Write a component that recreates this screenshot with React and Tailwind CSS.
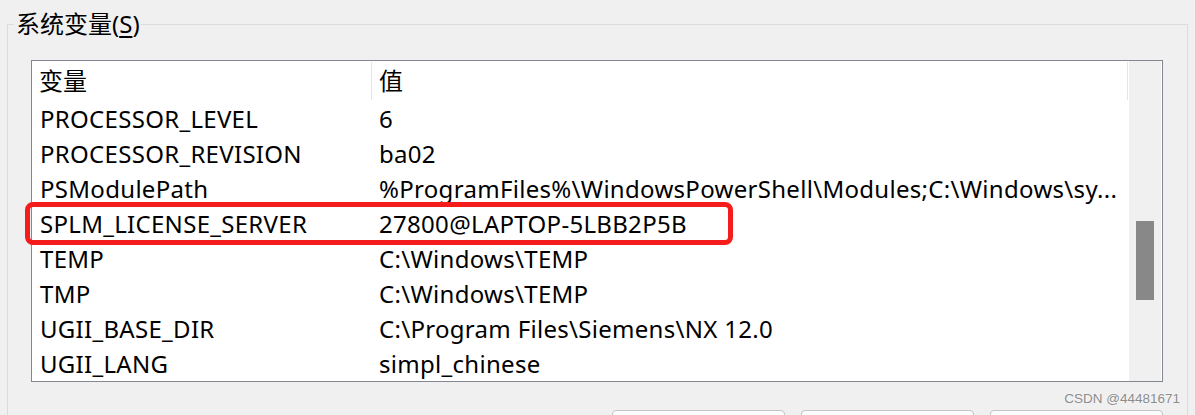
import React from 'react';

const rows = [
  ['PROCESSOR_LEVEL', '6'],
  ['PROCESSOR_REVISION', 'ba02'],
  ['PSModulePath', '%ProgramFiles%\\WindowsPowerShell\\Modules;C:\\Windows\\sy...'],
  ['SPLM_LICENSE_SERVER', '27800@LAPTOP-5LBB2P5B'],
  ['TEMP', 'C:\\Windows\\TEMP'],
  ['TMP', 'C:\\Windows\\TEMP'],
  ['UGII_BASE_DIR', 'C:\\Program Files\\Siemens\\NX 12.0'],
  ['UGII_LANG', 'simpl_chinese'],
];

const font = "font-['Noto_Sans','Noto_Sans_CJK_SC',sans-serif]";

const Row = ({ name, value }) => (
  <div className="flex h-[35px] leading-[35px] shrink-0 tracking-[0.3px]">
    <div className="w-[340px] pl-[8px] whitespace-nowrap overflow-hidden">{name}</div>
    <div className="flex-1 pl-[7px] whitespace-nowrap overflow-hidden">{value}</div>
  </div>
);

export default function App() {
  return (
    <div className={`relative w-[1195px] h-[415px] overflow-hidden bg-[#f0f0f0] text-black ${font}`}>
      <fieldset className="mx-[7px] mt-[9px] h-[440px] border border-[#dcdcdc]">
        <legend className="ml-[6px] pl-[2px] pr-[1px] text-[24px] leading-[30px]">
          系统变量(<span className="underline underline-offset-[3px]">S</span>)
        </legend>

        <div className="relative ml-[23px] mr-[24px] mt-[21px] h-[322px] border border-[#828790] bg-white flex text-[24px]">
          <div className="flex-1 flex flex-col overflow-hidden">
            <div className="flex h-[40px] leading-[40px] shrink-0">
              <div className="w-[339px] pl-[7px] border-r border-transparent">变量</div>
              <div className="flex-1 flex">
                <div className="w-px my-[1px] bg-[#e5e5e5]" />
                <div className="flex-1 pl-[7px]">值</div>
                <div className="w-px my-[1px] bg-[#e5e5e5]" />
              </div>
              <div className="w-px" />
            </div>
            {rows.map(([n, v]) => (
              <Row key={n} name={n} value={v} />
            ))}
          </div>
          <div className="w-[33px] bg-[#f0f0f0] border-r border-white pt-[160px] px-[7px]">
            <div className="h-[79px] bg-[#888888]" />
          </div>

          <div className="absolute left-[-7px] top-[141px] w-[708px] h-[43px] border-[5px] border-[#f51c1c] rounded-[8px]" />
        </div>

        <div className="flex justify-end gap-[16px] mr-[24px] mt-[28px]">
          <div className="w-[173px] h-[30px] bg-[#fdfdfd] border border-[#c4c4c4] rounded-[4px]" />
          <div className="w-[173px] h-[30px] bg-[#fdfdfd] border border-[#c4c4c4] rounded-[4px]" />
          <div className="w-[173px] h-[30px] bg-[#fdfdfd] border border-[#c4c4c4] rounded-[4px]" />
        </div>
      </fieldset>

      <div className="absolute right-[15px] top-[390px] text-[13.5px] leading-[18px] text-[#8c8c8c] font-['Liberation_Sans',Arial,sans-serif] [text-shadow:0_0_2px_#fff]">
        CSDN @44481671
      </div>
    </div>
  );
}
